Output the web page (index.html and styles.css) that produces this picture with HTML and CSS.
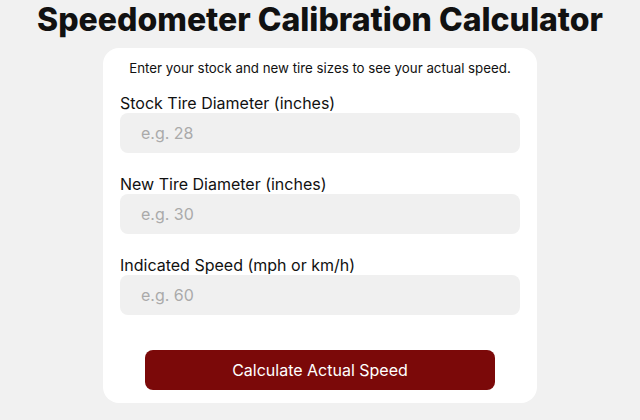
FILE: index.html
```html
<!DOCTYPE html>
<html lang="en">
<head>
    <meta charset="UTF-8">
    <meta name="viewport" content="width=device-width, initial-scale=1.0">
    <title>Speedometer Calibration Calculator</title>
    <link rel="stylesheet" href="styles.css">
</head>
<body>
    <h1>Speedometer Calibration Calculator</h1>
    <div class="card">
        <p class="intro">Enter your stock and new tire sizes to see your actual speed.</p>

        <label for="stock">Stock Tire Diameter (inches)</label>
        <input type="number" id="stock" placeholder="e.g. 28">

        <label for="newTire">New Tire Diameter (inches)</label>
        <input type="number" id="newTire" placeholder="e.g. 30">

        <label for="speed">Indicated Speed (mph or km/h)</label>
        <input type="number" id="speed" placeholder="e.g. 60">

        <button class="calc-btn">Calculate Actual Speed</button>
    </div>
</body>
</html>
```

FILE: styles.css
```css
body {
    font-family: Inter, "Open Sans", sans-serif;
    background-color: #f1f1f1;
    margin: 0;
    padding: 0;
    color: #111;
}
h1 {
    margin: 0;
    text-align: center;
    font-size: 32px;
    line-height: 40px;
    font-weight: 800;
}
.card {
    background-color: #fff;
    border-radius: 16px;
    width: 400px;
    margin: 8px auto 0;
    padding: 10px 17px 13px;
    display: flex;
    flex-direction: column;
}
.intro {
    margin: 0 0 15px;
    text-align: center;
    font-size: 13.3px;
    line-height: 20px;
}
label {
    font-size: 16px;
    line-height: 20px;
}
input {
    height: 40px;
    border: none;
    border-radius: 8px;
    background-color: #f0f0f0;
    padding: 0 21px;
    font-family: inherit;
    font-size: 16px;
    margin-bottom: 21px;
    box-sizing: border-box;
}
input::placeholder {
    color: #aaa;
}
.calc-btn {
    align-self: center;
    width: 350px;
    height: 40px;
    margin-top: 14px;
    border: none;
    border-radius: 8px;
    background-color: #7b0909;
    color: #fff;
    font-family: inherit;
    font-size: 16px;
    cursor: pointer;
}
```
